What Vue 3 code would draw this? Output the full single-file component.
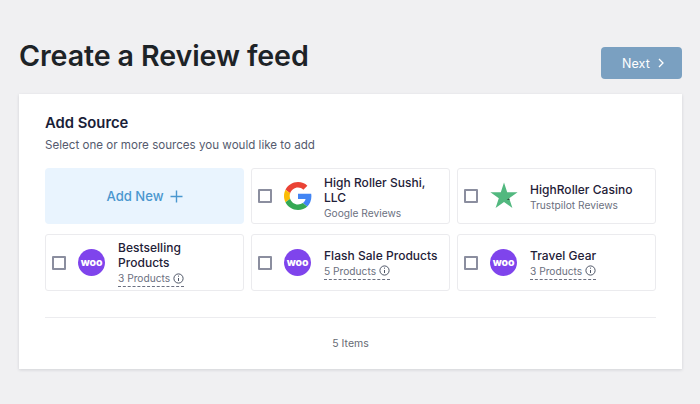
<script setup>
const products = [
  { id: 1, name: 'Bestselling Products', count: '3 Products' },
  { id: 2, name: 'Flash Sale Products', count: '5 Products' },
  { id: 3, name: 'Travel Gear', count: '3 Products' }
]
</script>

<template>
  <main class="page">
    <header class="head">
      <h1>Create a Review feed</h1>
      <button class="next" type="button">
        Next
        <svg width="8" height="10" viewBox="0 0 8 10" fill="none" stroke="#fff" stroke-width="1.3"><path d="M2 1l4 4-4 4" /></svg>
      </button>
    </header>

    <section class="card">
      <h2>Add Source</h2>
      <p class="lead">Select one or more sources you would like to add</p>

      <div class="grid">
        <button class="add" type="button">
          Add New
          <svg width="13" height="13" viewBox="0 0 13 13" stroke="#4a97cf" stroke-width="1.4"><path d="M6.5 0.5v12M0.5 6.5h12" /></svg>
        </button>

        <div class="item">
          <span class="check"></span>
          <svg class="logo" viewBox="0 0 48 48">
            <path fill="#EA4335" d="M24 9.5c3.54 0 6.71 1.22 9.21 3.6l6.85-6.85C35.9 2.38 30.47 0 24 0 14.62 0 6.51 5.38 2.56 13.22l7.98 6.19C12.43 13.72 17.74 9.5 24 9.5z" />
            <path fill="#4285F4" d="M46.98 24.55c0-1.57-.15-3.09-.38-4.55H24v9.02h12.94c-.58 2.96-2.26 5.48-4.78 7.18l7.73 6c4.51-4.18 7.09-10.36 7.09-17.65z" />
            <path fill="#FBBC05" d="M10.53 28.59c-.48-1.45-.76-2.99-.76-4.59s.27-3.14.76-4.59l-7.98-6.19C.92 16.46 0 20.12 0 24c0 3.88.92 7.54 2.56 10.78l7.97-6.19z" />
            <path fill="#34A853" d="M24 48c6.48 0 11.93-2.13 15.89-5.81l-7.73-6c-2.15 1.45-4.92 2.3-8.16 2.3-6.26 0-11.57-4.22-13.47-9.91l-7.98 6.19C6.51 42.62 14.62 48 24 48z" />
          </svg>
          <div class="info">
            <div class="name">High Roller Sushi, LLC</div>
            <div class="sub">Google Reviews</div>
          </div>
        </div>

        <div class="item">
          <span class="check"></span>
          <svg class="logo" viewBox="0 0 28 28">
            <path fill="#52b87f" d="M14 0.5l3.2 9.7H27.6l-8.4 6 3.2 9.8-8.4-6-8.4 6 3.2-9.8-8.4-6H10.8z" />
            <path fill="#2a2f2c" d="M16.6 17.6l2.5-1 .4 1.3z" />
          </svg>
          <div class="info">
            <div class="name">HighRoller Casino</div>
            <div class="sub">Trustpilot Reviews</div>
          </div>
        </div>

        <div v-for="p in products" :key="p.id" class="item">
          <span class="check"></span>
          <span class="woo">woo</span>
          <div class="info">
            <div class="name">{{ p.name }}</div>
            <div class="sub dashed">
              {{ p.count }}
              <svg class="tip" viewBox="0 0 11 11" fill="none" stroke="#4d5565"><circle cx="5.5" cy="5.5" r="4.6" /><path d="M5.5 5v3M5.5 2.6v1.1" /></svg>
            </div>
          </div>
        </div>
      </div>

      <footer class="foot">5 Items</footer>
    </section>
  </main>
</template>

<style>
html, body { margin: 0; background: #f0f0f2; }
</style>

<style scoped>
.page {
  box-sizing: border-box;
  width: 700px;
  height: 404px;
  padding: 0 18px 0 19px;
  background: #f0f0f2;
  font-family: Inter, "Liberation Sans", sans-serif;
  overflow: hidden;
}
.head {
  display: flex;
  justify-content: space-between;
  height: 94px;
}
h1 {
  margin: 38px 0 0;
  font-size: 28.6px;
  line-height: 36px;
  font-weight: 600;
  color: #1d2327;
  letter-spacing: -0.1px;
}
.next {
  display: flex;
  align-items: center;
  justify-content: center;
  gap: 7px;
  width: 81px;
  height: 32px;
  margin-top: 47px;
  padding-left: 10px;
  border: 0;
  border-radius: 4px;
  background: #7aa0c1;
  color: #fff;
  font: 400 12.5px Inter, sans-serif;
  letter-spacing: 0.1px;
}
.card {
  box-sizing: border-box;
  height: 275px;
  padding: 20px 26px 0;
  background: #fff;
  box-shadow: 0 1px 3px rgba(30, 35, 50, 0.14);
}
h2 {
  margin: 0;
  font-size: 14.8px;
  line-height: 18px;
  font-weight: 600;
  color: #1a1e38;
}
.lead {
  margin: 5px 0 0;
  font-size: 11.6px;
  line-height: 16px;
  color: #555b6e;
}
.grid {
  display: grid;
  grid-template-columns: repeat(3, 1fr);
  grid-template-rows: 56px 57px;
  gap: 10px 7px;
  margin-top: 15px;
}
.add {
  display: flex;
  align-items: center;
  justify-content: center;
  gap: 6px;
  border: 0;
  border-radius: 4px;
  background: #e9f4fe;
  color: #4a97cf;
  font: 500 13.1px Inter, sans-serif;
}
.item {
  box-sizing: border-box;
  display: flex;
  align-items: center;
  padding-left: 6px;
  border: 1px solid #ebebee;
  border-radius: 3px;
  background: #fff;
}
.check {
  box-sizing: border-box;
  flex: none;
  width: 14px;
  height: 14px;
  border: 2px solid #8b8e9f;
  border-radius: 1px;
}
.logo {
  flex: none;
  width: 28px;
  height: 28px;
  margin-left: 12px;
}
.woo {
  flex: none;
  display: flex;
  align-items: center;
  justify-content: center;
  width: 27px;
  height: 27px;
  margin: 0 1px 0 12px;
  border-radius: 50%;
  background: #7f44ec;
  color: #fff;
  font: 800 10.5px Inter, sans-serif;
  letter-spacing: -0.1px;
}
.info {
  margin-left: 12px;
  padding-top: 2px;
  max-width: 115px;
  min-width: 0;
}
.name {
  font-size: 12px;
  line-height: 15px;
  font-weight: 500;
  letter-spacing: 0.03px;
  color: #1f2138;
}
.sub {
  margin-top: 1px;
  font-size: 10.2px;
  line-height: 14px;
  color: #6b7080;
}
.dashed {
  display: flex;
  align-items: center;
  gap: 3px;
  width: 66px;
  padding-bottom: 1px;
  border-bottom: 1px dashed #6b7080;
  white-space: nowrap;
}
.tip {
  flex: none;
  width: 11px;
  height: 11px;
}
.foot {
  margin-top: 26px;
  height: 50px;
  border-top: 1px solid #ececef;
  text-align: center;
  font-size: 10.5px;
  line-height: 51px;
  color: #666a73;
}
</style>
